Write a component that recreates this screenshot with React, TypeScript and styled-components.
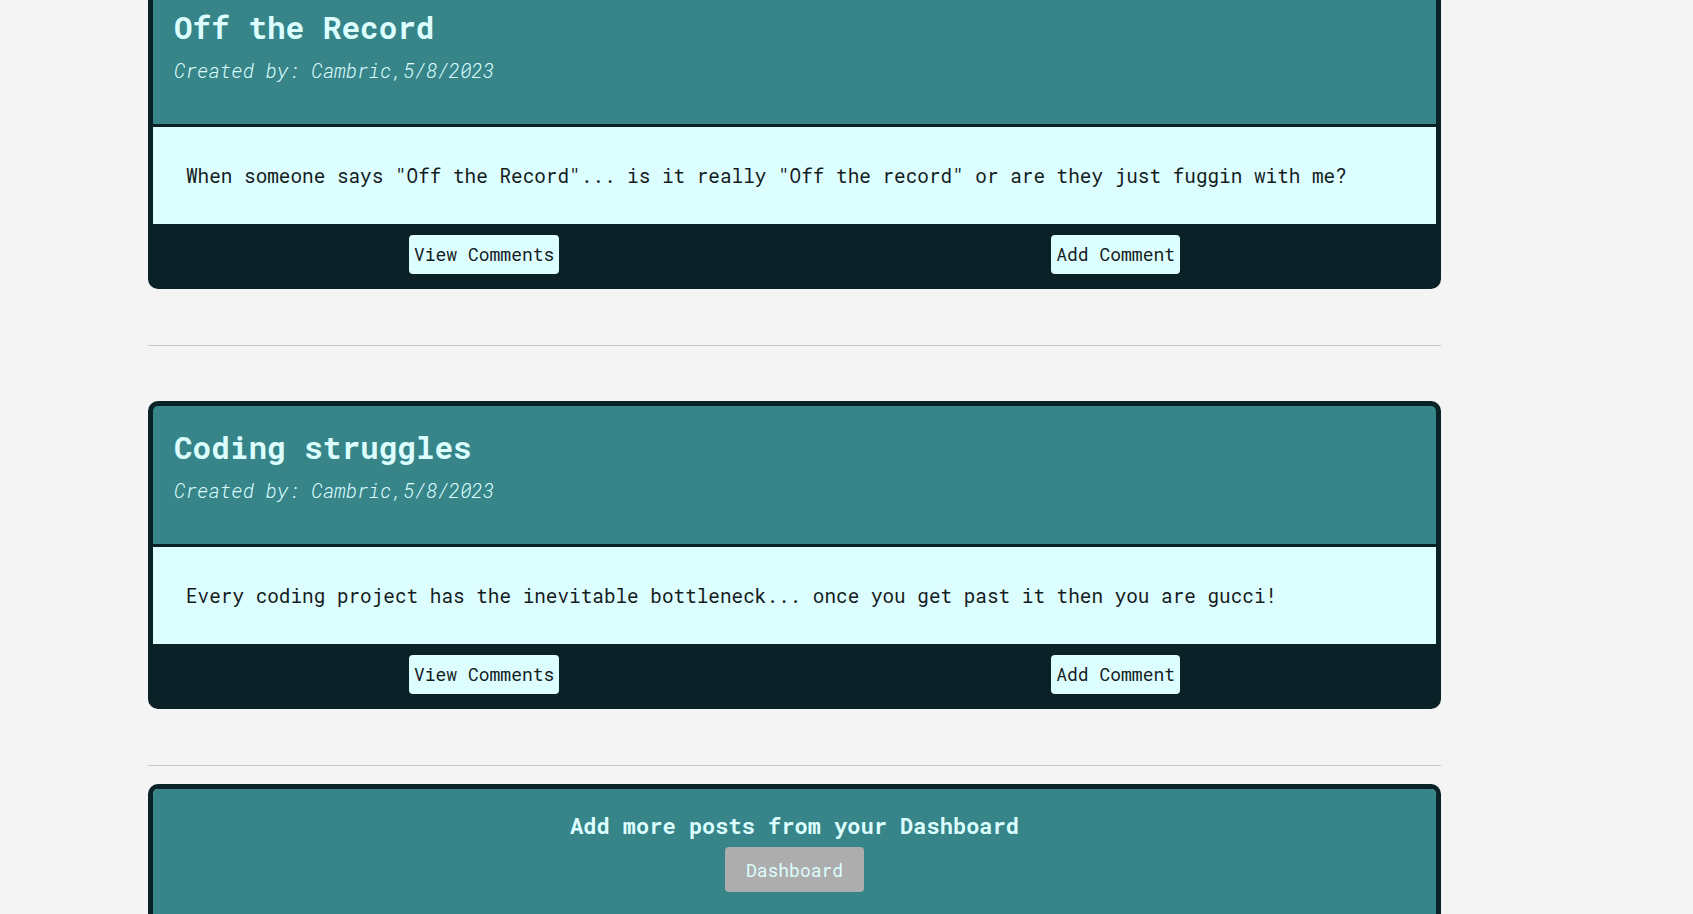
import React from "react";
import styled, { createGlobalStyle } from "styled-components";

const GlobalStyle = createGlobalStyle`
  html, body {
    margin: 0;
    padding: 0;
    background: #f4f4f4;
  }
  body {
    font-family: "Roboto Mono", "DejaVu Sans Mono", "Liberation Mono", monospace;
    overflow: hidden;
  }
  * { box-sizing: border-box; }
`;

const DARK = "#0a2127";
const TEAL = "#378589";
const LIGHT = "#ddfeff";

const Feed = styled.main`
  display: flex;
  flex-direction: column;
  width: 1293px;
  margin: -19px 0 0 148px;
`;

const Card = styled.article`
  display: flex;
  flex-direction: column;
  border: 5px solid ${DARK};
  border-radius: 10px;
  overflow: hidden;
  background: ${DARK};
`;

const Header = styled.header`
  display: flex;
  flex-direction: column;
  background: ${TEAL};
  color: ${LIGHT};
  padding: 20px 21px 41px;
  border-bottom: 3px solid ${DARK};
`;

const Title = styled.h2`
  margin: 0 0 10px;
  font-size: 31px;
  line-height: 42px;
  font-weight: 700;
`;

const Meta = styled.p`
  margin: 0;
  font-size: 19.5px;
  line-height: 25px;
  font-style: italic;
  font-weight: 300;
`;

const Body = styled.div`
  background: ${LIGHT};
  padding: 35px 33px;
`;

const Text = styled.p`
  margin: 0;
  font-size: 19.35px;
  line-height: 27px;
  color: #141c1e;
`;

const Footer = styled.footer`
  display: flex;
  justify-content: space-around;
  align-items: center;
  background: ${DARK};
  padding: 10.5px 10px;
`;

const SmallButton = styled.button`
  font-family: inherit;
  font-size: 18px;
  line-height: 24px;
  padding: 7.5px 5px;
  border: none;
  border-radius: 4px;
  background: ${LIGHT};
  color: #141c1e;
  cursor: pointer;
`;

const Divider = styled.hr<{ $tight?: boolean }>`
  width: 100%;
  height: 0;
  border: none;
  border-top: 1px solid #c6c6c6;
  margin: 56px 0 ${(p) => (p.$tight ? "18px" : "55px")};
`;

const CtaPanel = styled.section`
  display: flex;
  flex-direction: column;
  align-items: center;
  background: ${TEAL};
  padding: 22px 20px 40px;
  color: ${LIGHT};
`;

const CtaTitle = styled.h3`
  margin: 0 0 7px;
  font-size: 22px;
  line-height: 29px;
  font-weight: 700;
`;

const DashButton = styled.button`
  font-family: inherit;
  font-size: 18px;
  line-height: 24px;
  padding: 10.5px 21px;
  border: none;
  border-radius: 4px;
  background: #adadad;
  color: ${LIGHT};
  cursor: pointer;
`;

const posts = [
  {
    title: "Off the Record",
    author: "Cambric",
    date: "5/8/2023",
    body: 'When someone says "Off the Record"... is it really "Off the record" or are they just fuggin with me?',
  },
  {
    title: "Coding struggles",
    author: "Cambric",
    date: "5/8/2023",
    body: "Every coding project has the inevitable bottleneck... once you get past it then you are gucci!",
  },
];

export default function App() {
  return (
    <>
      <GlobalStyle />
      <Feed>
        {posts.map((post, i) => (
          <React.Fragment key={post.title}>
            <Card>
              <Header>
                <Title>{post.title}</Title>
                <Meta>
                  Created by: {post.author},{post.date}
                </Meta>
              </Header>
              <Body>
                <Text>{post.body}</Text>
              </Body>
              <Footer>
                <SmallButton>View Comments</SmallButton>
                <SmallButton>Add Comment</SmallButton>
              </Footer>
            </Card>
            <Divider $tight={i === posts.length - 1} />
          </React.Fragment>
        ))}
        <Card>
          <CtaPanel>
            <CtaTitle>Add more posts from your Dashboard</CtaTitle>
            <DashButton>Dashboard</DashButton>
          </CtaPanel>
        </Card>
      </Feed>
    </>
  );
}
